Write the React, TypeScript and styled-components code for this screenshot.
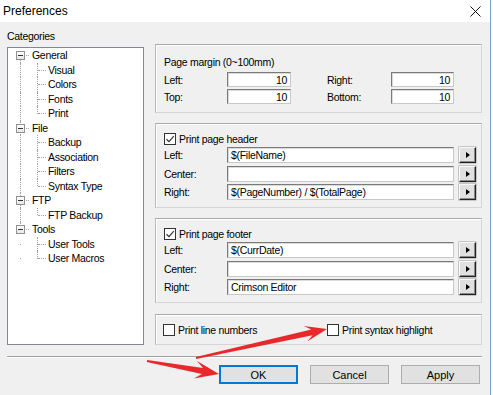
import styled, { createGlobalStyle } from 'styled-components'

const GlobalStyle = createGlobalStyle`
  html, body {
    margin: 0;
    padding: 0;
    background: #ffffff;
  }
  body {
    font-family: "Liberation Sans", Arial, sans-serif;
    font-size: 10.5px;
    letter-spacing: -0.3px;
    color: #000;
  }
`

type TreeNode = { label: string; children: string[] }

const tree: TreeNode[] = [
  { label: 'General', children: ['Visual', 'Colors', 'Fonts', 'Print'] },
  { label: 'File', children: ['Backup', 'Association', 'Filters', 'Syntax Type'] },
  { label: 'FTP', children: ['FTP Backup'] },
  { label: 'Tools', children: ['User Tools', 'User Macros'] },
]

// tapered annotation arrow, tail -> tip
function arrow(tx: number, ty: number, hx: number, hy: number, headLen: number, headHalf: number) {
  const dx = hx - tx
  const dy = hy - ty
  const len = Math.hypot(dx, dy)
  const ux = dx / len
  const uy = dy / len
  const nx = -uy
  const ny = ux
  const at = (d: number, w: number) => `${(hx - ux * d + nx * w).toFixed(1)},${(hy - uy * d + ny * w).toFixed(1)}`
  return [
    at(len, 1),
    at(headLen * 0.7, 3),
    at(headLen, headHalf),
    at(0, 0),
    at(headLen, -headHalf),
    at(headLen * 0.7, -3),
    at(len, -1),
  ].join(' ')
}

const Window = styled.div`
  position: relative;
  width: 490px;
  height: 395px;
  border-right: 1px solid #7b9fcb;
  background: #f0f0f0;
  display: flex;
  flex-direction: column;
  overflow: hidden;
`

const TitleBar = styled.div`
  height: 22px;
  flex: 0 0 22px;
  background: #ffffff;
  display: flex;
  align-items: center;
  justify-content: space-between;
  padding: 0 8px 0 3px;
`

const Title = styled.span`
  font-size: 12px;
  letter-spacing: 0;
  margin-top: -1px;
`

const CloseIcon = styled.svg`
  width: 11px;
  height: 11px;
  margin-right: 1px;
`

const Body = styled.div`
  display: flex;
  padding-left: 7px;
`

const LeftColumn = styled.div`
  display: flex;
  flex-direction: column;
  padding-top: 8px;
`

const Caption = styled.div`
  height: 13px;
  line-height: 13px;
  margin-bottom: 4px;
`

const TreeBox = styled.div`
  box-sizing: content-box;
  width: 131px;
  height: 296px;
  background: #ffffff;
  border: 1px solid #828790;
  padding-left: 4px;
`

const TreeRow = styled.div`
  display: flex;
  align-items: center;
  height: 14.5px;
  white-space: nowrap;
`

const Cell = styled.span<{ $up?: boolean; $down?: boolean; $right?: boolean }>`
  position: relative;
  flex: 0 0 17px;
  align-self: stretch;

  &::before {
    content: '';
    position: absolute;
    left: 8px;
    top: ${(p) => (p.$up ? '0' : '7px')};
    bottom: ${(p) => (p.$down ? '0' : '7px')};
    border-left: 1px dotted #a0a0a0;
  }

  &::after {
    content: '';
    display: ${(p) => (p.$right ? 'block' : 'none')};
    position: absolute;
    left: 9px;
    right: 0;
    top: 7px;
    border-top: 1px dotted #a0a0a0;
  }
`

const Expander = styled.span`
  position: absolute;
  z-index: 1;
  left: 4px;
  top: 3px;
  width: 7px;
  height: 7px;
  border: 1px solid #919191;
  background: linear-gradient(#ffffff, #e6e6e6);

  &::after {
    content: '';
    position: absolute;
    left: 1px;
    right: 1px;
    top: 3px;
    height: 1px;
    background: #333;
  }
`

const NodeLabel = styled.span<{ $top?: boolean }>`
  margin-left: ${(p) => (p.$top ? '3px' : '2px')};
`

const RightColumn = styled.div`
  display: flex;
  flex-direction: column;
  gap: 10px;
  margin-left: 11px;
  padding-top: 22px;
  width: 327px;
`

const Group = styled.div<{ $h: number; $flat?: boolean }>`
  box-sizing: border-box;
  height: ${(p) => p.$h}px;
  border: 1px solid #d5d5d5;
  border-top-color: #a9a9a9;
  border-left-color: #b9b9b9;
  box-shadow: inset 1px 1px 0 #ffffff;
  padding: ${(p) => (p.$flat ? '0 5px 0 7px' : '8px 5px 0 8px')};
`

const GroupTitle = styled.div`
  line-height: 14px;
  padding-top: 2px;
  margin-bottom: 3px;
`

const MarginGrid = styled.div`
  display: grid;
  grid-template-columns: 63px 64px 36px 64px 63px;
  grid-auto-rows: 15px;
  row-gap: 2px;
  align-items: center;
`

const Spacer = styled.span``

const Field = styled.div<{ $num?: boolean }>`
  box-sizing: border-box;
  height: 100%;
  background: #ffffff;
  border: 1px solid #7a7a7a;
  border-right-color: #c8c8c8;
  border-bottom-color: #c8c8c8;
  box-shadow: inset 1px 1px 0 #dadada;
  padding: 0 3px;
  display: flex;
  align-items: center;
  justify-content: ${(p) => (p.$num ? 'flex-end' : 'flex-start')};
  white-space: nowrap;
  overflow: hidden;
`

const CheckRow = styled.label`
  display: flex;
  align-items: center;
  height: 13px;
  margin-bottom: 2px;
`

const Box = styled.span`
  box-sizing: border-box;
  width: 12px;
  height: 12px;
  border: 1px solid #333333;
  background: #ffffff;
  margin-right: 3px;
  display: flex;
  align-items: center;
  justify-content: center;
`

const FieldRows = styled.div`
  display: flex;
  flex-direction: column;
  gap: 2.5px;
`

const FieldRow = styled.div`
  display: grid;
  grid-template-columns: 63px 227px 17px;
  height: 16px;
  align-items: center;
`

const PickButton = styled.div`
  box-sizing: border-box;
  height: 16px;
  margin-left: 5px;
  width: 17px;
  background: #e1e1e1;
  border: 1px solid #f8f8f8;
  border-right-color: #222;
  border-bottom-color: #222;
  box-shadow: inset -1px -1px 0 #8a8a8a, 0 0 0 0.5px #9a9a9a;
  display: flex;
  align-items: center;
  justify-content: center;

  &::after {
    content: '';
    width: 0;
    height: 0;
    border-top: 3.5px solid transparent;
    border-bottom: 3.5px solid transparent;
    border-left: 4px solid #000;
    margin-left: 1px;
  }
`

const OptionsRow = styled.div`
  display: flex;
  align-items: center;
  height: 100%;
`

const Option = styled.label<{ $w?: number }>`
  display: flex;
  align-items: center;
  width: ${(p) => (p.$w ? `${p.$w}px` : 'auto')};
`

const Separator = styled.div`
  margin: 11px 8px 0 7px;
  height: 0;
  border-top: 1px solid #a0a0a0;
  border-bottom: 1px solid #ffffff;
`

const ButtonBar = styled.div`
  display: flex;
  gap: 12px;
  padding: 7px 0 0 219px;
`

const DialogButton = styled.button<{ $default?: boolean }>`
  box-sizing: border-box;
  width: 79px;
  height: 19px;
  padding: 0;
  font: inherit;
  letter-spacing: 0;
  font-size: 11px;
  color: #000;
  background: #e1e1e1;
  border: 1px solid ${(p) => (p.$default ? '#0078d7' : '#adadad')};
  box-shadow: ${(p) => (p.$default ? 'inset 0 0 0 1px #0078d7' : 'none')};
`

const Overlay = styled.svg`
  position: absolute;
  left: 0;
  top: 0;
  pointer-events: none;
`

function Check({ on }: { on?: boolean }) {
  return (
    <Box>
      {on && (
        <svg width="10" height="10" viewBox="0 0 10 10">
          <path d="M1.5 5.2 L4 7.6 L8.8 2.2" fill="none" stroke="#333" strokeWidth="1.2" />
        </svg>
      )}
    </Box>
  )
}

function Tree() {
  return (
    <TreeBox>
      {tree.map((node, i) => {
        const lastNode = i === tree.length - 1
        return (
          <div key={node.label}>
            <TreeRow>
              <Cell $up={i > 0} $down={!lastNode} $right>
                <Expander />
              </Cell>
              <NodeLabel $top>{node.label}</NodeLabel>
            </TreeRow>
            {node.children.map((child, j) => (
              <TreeRow key={child}>
                <Cell $up={!lastNode} $down={!lastNode} />
                <Cell $up $down={j < node.children.length - 1} $right />
                <NodeLabel>{child}</NodeLabel>
              </TreeRow>
            ))}
          </div>
        )
      })}
    </TreeBox>
  )
}

function HeaderFooter({ title, left, right }: { title: string; left: string; right: string }) {
  return (
    <Group $h={85}>
      <CheckRow>
        <Check on />
        {title}
      </CheckRow>
      <FieldRows>
        <FieldRow>
          <span>Left:</span>
          <Field>{left}</Field>
          <PickButton />
        </FieldRow>
        <FieldRow>
          <span>Center:</span>
          <Field />
          <PickButton />
        </FieldRow>
        <FieldRow>
          <span>Right:</span>
          <Field>{right}</Field>
          <PickButton />
        </FieldRow>
      </FieldRows>
    </Group>
  )
}

export default function App() {
  return (
    <>
      <GlobalStyle />
      <Window>
        <TitleBar>
          <Title>Preferences</Title>
          <CloseIcon viewBox="0 0 11 11">
            <path d="M0.5 0.5 L10.5 10.5 M10.5 0.5 L0.5 10.5" stroke="#111" strokeWidth="1" />
          </CloseIcon>
        </TitleBar>

        <Body>
          <LeftColumn>
            <Caption>Categories</Caption>
            <Tree />
          </LeftColumn>

          <RightColumn>
            <Group $h={69}>
              <GroupTitle>Page margin (0~100mm)</GroupTitle>
              <MarginGrid>
                <span>Left:</span>
                <Field $num>10</Field>
                <Spacer />
                <span>Right:</span>
                <Field $num>10</Field>
                <span>Top:</span>
                <Field $num>10</Field>
                <Spacer />
                <span>Bottom:</span>
                <Field $num>10</Field>
              </MarginGrid>
            </Group>

            <HeaderFooter title="Print page header" left="$(FileName)" right="$(PageNumber) / $(TotalPage)" />
            <HeaderFooter title="Print page footer" left="$(CurrDate)" right="Crimson Editor" />

            <Group $h={31} $flat style={{ marginTop: 1 }}>
              <OptionsRow>
                <Option $w={164}>
                  <Check />
                  Print line numbers
                </Option>
                <Option>
                  <Check />
                  Print syntax highlight
                </Option>
              </OptionsRow>
            </Group>
          </RightColumn>
        </Body>

        <Separator />

        <ButtonBar>
          <DialogButton $default>OK</DialogButton>
          <DialogButton>Cancel</DialogButton>
          <DialogButton>Apply</DialogButton>
        </ButtonBar>

        <Overlay width="493" height="395" viewBox="0 0 493 395">
          <polygon points={arrow(147, 361, 219, 374, 24, 9)} fill="#e8282b" />
          <polygon points={arrow(196, 358, 327, 329, 22, 8)} fill="#e8282b" />
        </Overlay>
      </Window>
    </>
  )
}
